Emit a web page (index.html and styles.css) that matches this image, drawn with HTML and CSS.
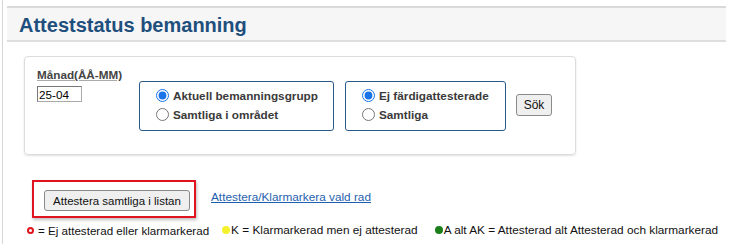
FILE: index.html
```
<!DOCTYPE html>
<html lang="sv">
<head>
<meta charset="utf-8">
<title>Atteststatus bemanning</title>
<link rel="stylesheet" href="styles.css">
</head>
<body>
<div class="page">
  <div class="panel">
    <div class="panel-head"><h1>Atteststatus bemanning</h1></div>
    <div class="panel-body">
      <div class="card">
        <div class="month">
          <label class="month-label" for="m">Månad(ÅÅ-MM)</label>
          <input id="m" class="month-input" type="text" value="25-04">
        </div>
        <div class="group g1">
          <label class="opt"><input type="radio" name="a" checked> Aktuell bemanningsgrupp</label>
          <label class="opt"><input type="radio" name="a"> Samtliga i området</label>
        </div>
        <div class="group g2">
          <label class="opt"><input type="radio" name="b" checked> Ej färdigattesterade</label>
          <label class="opt"><input type="radio" name="b"> Samtliga</label>
        </div>
        <button class="btn sok" type="button">Sök</button>
      </div>
      <div class="actions">
        <div class="highlight"><button class="btn all" type="button">Attestera samtliga i listan</button></div>
        <a class="link" href="#">Attestera/Klarmarkera vald rad</a>
      </div>
      <div class="legend">
        <span class="item first"><span class="ring"></span>= Ej attesterad eller klarmarkerad</span>
        <span class="item second"><span class="dot yellow"></span>K = Klarmarkerad men ej attesterad</span>
        <span class="item third"><span class="dot green"></span>A alt AK = Attesterad alt Attesterad och klarmarkerad</span>
      </div>
    </div>
  </div>
</div>
</body>
</html>
```
FILE: styles.css
```
* { box-sizing: border-box; }
html, body { margin: 0; padding: 0; background: #fff; }
body { font-family: "Liberation Sans", Arial, sans-serif; font-size: 11.5px; color: #222; }
.page {
  margin-left: 2px;
  border-left: 1px solid #d6d6d6;
  padding: 6px 0 0 4px;
  height: 244px;
  width: 724px;
}
.panel { width: 719px; }
.panel-head {
  background: #f6f6f6;
  border-top: 2px solid #d9d9d9;
  border-bottom: 2px solid #dedede;
  height: 36px;
  padding: 5px 0 0 12px;
}
h1 {
  margin: 0;
  font-size: 20px;
  font-weight: bold;
  color: #1e4f7d;
  line-height: 24px;
}
.panel-body { padding: 14px 0 0 17px; }
.card {
  width: 552px;
  height: 99px;
  border: 1px solid #dcdcdc;
  border-radius: 4px;
  box-shadow: 0 1px 2px rgba(0,0,0,0.12);
  display: flex;
  align-items: flex-start;
  padding: 11px 0 0 12px;
}
.month { display: flex; flex-direction: column; width: 102px; }
.month-label { font-weight: bold; color: #444; line-height: 14px; font-size: 11.7px; text-decoration: underline; text-decoration-color: #aaa; }
.month-input {
  margin-top: 4px;
  width: 45px;
  height: 16px;
  border: 1px solid #aaa;
  border-top-color: #777;
  border-left-color: #777;
  padding: 0 1px;
  font-family: "Liberation Sans", Arial, sans-serif;
  font-size: 11.7px;
  color: #000;
}
.group {
  margin-top: 13px;
  height: 50px;
  border: 1px solid #2b5a89;
  border-radius: 3px;
  display: flex;
  flex-direction: column;
  padding: 4px 0 0 14px;
}
.g1 { width: 195px; }
.g2 { width: 161px; margin-left: 11px; }
.opt {
  display: flex;
  align-items: center;
  font-weight: bold;
  font-size: 11.75px;
  color: #3a3a3a;
  line-height: 19px;
  height: 19px;
}
.opt input { margin: 0 4px 0 2px; width: 13px; height: 13px; accent-color: #1a73e8; }
.btn {
  font-family: "Liberation Sans", Arial, sans-serif;
  font-size: 11.5px;
  color: #111;
  background: #efefef;
  border: 1px solid #8a8a8a;
  border-radius: 3px;
  padding: 0 6px;
  cursor: pointer;
}
.sok { margin: 26px 0 0 10px; height: 22px; width: 36px; padding: 0; font-size: 12px; }
.actions { display: flex; align-items: center; margin-top: 25px; margin-left: 8px; }
.highlight {
  border: 2px solid #e0141e;
  padding: 8px 4px 5px 10px;
  box-shadow: 1px 2px 3px rgba(0,0,0,0.25);
  height: 38px;
}
.all { height: 21px; width: 146px; padding: 0; }
.link { margin-left: 15px; color: #1f5fae; text-decoration: underline; margin-top: -5px; font-size: 11.8px; }
.legend { display: flex; align-items: center; margin-top: 4px; margin-left: 3px; height: 16px; font-size: 11.8px; color: #111; }
.item { display: flex; align-items: center; white-space: nowrap; }
.first { font-size: 11.6px; }
.second { margin-left: 13px; }
.third { margin-left: 17px; }
.ring { width: 7px; height: 7px; border: 2px solid #e0141e; border-radius: 50%; margin-right: 4px; }
.dot { width: 8px; height: 8px; border-radius: 50%; margin-right: 1px; }
.yellow { background: #f5f02c; }
.green { background: #1a7f1a; }
```
